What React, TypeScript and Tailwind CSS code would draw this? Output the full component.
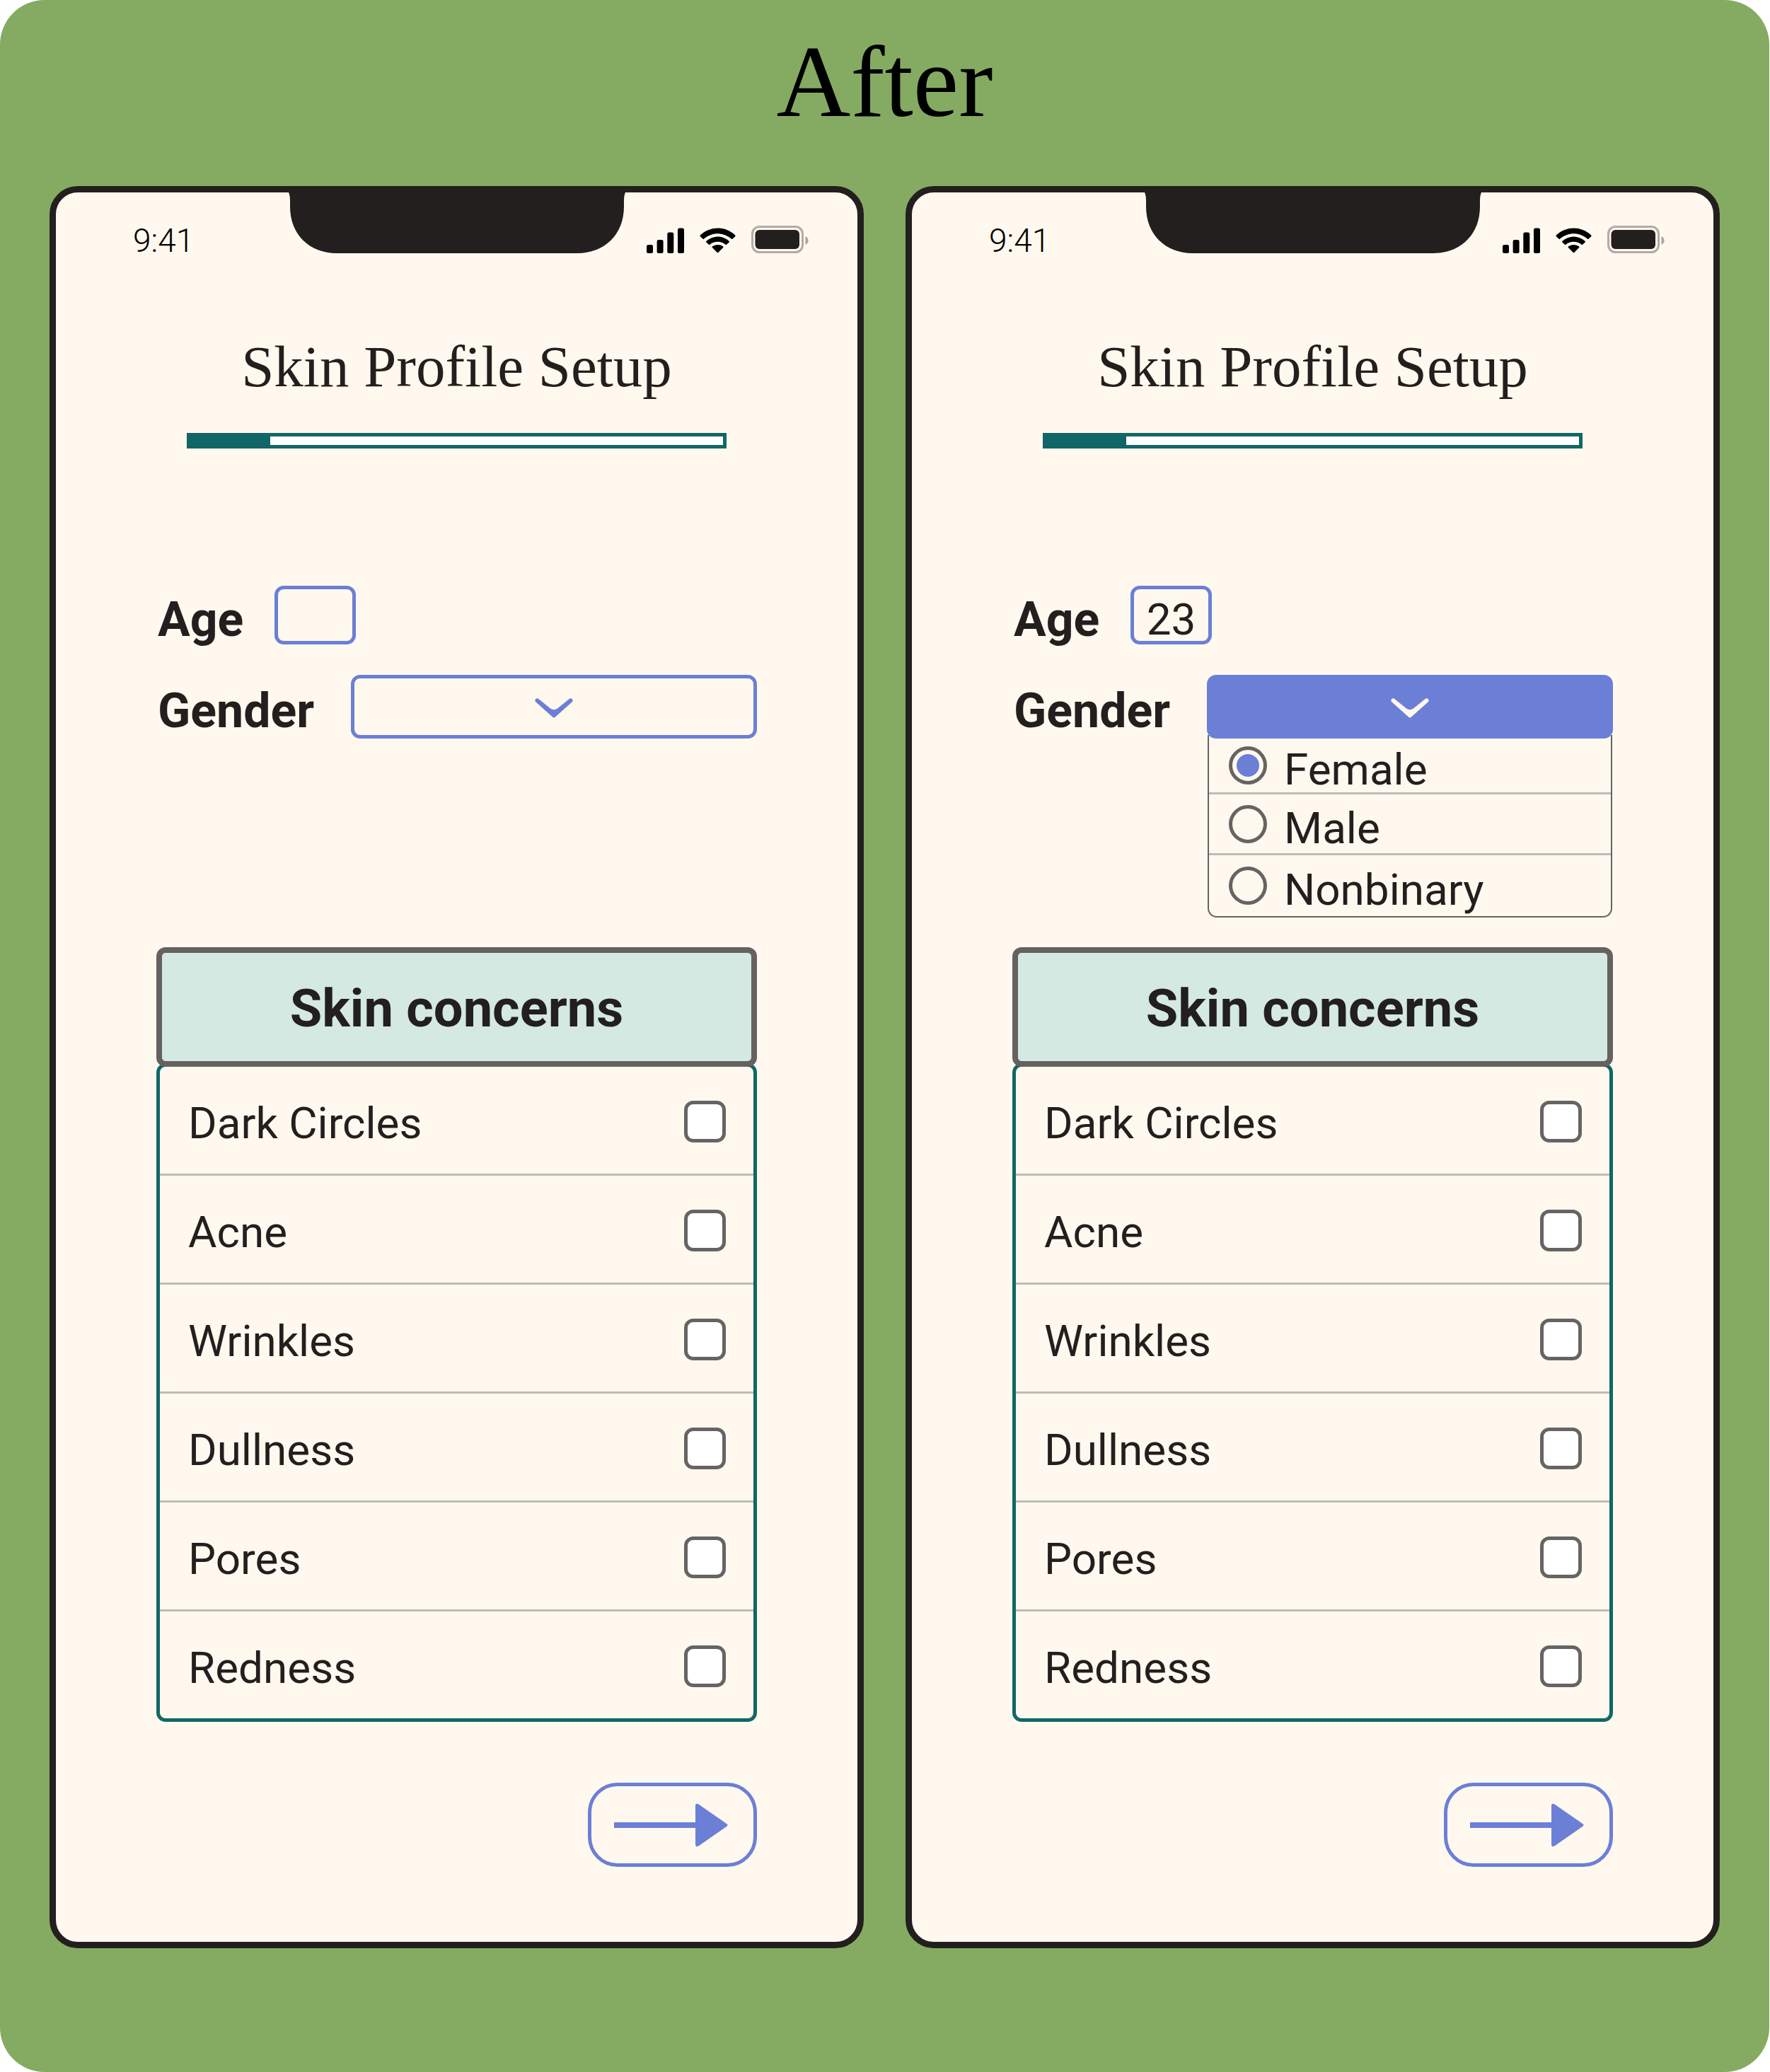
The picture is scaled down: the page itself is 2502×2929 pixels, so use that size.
import { useState } from "react";

const CONCERNS = ["Dark Circles", "Acne", "Wrinkles", "Dullness", "Pores", "Redness"];
const GENDERS = ["Female", "Male", "Nonbinary"];

function Notch() {
  return (
    <svg viewBox="0 0 476 86" className="h-[86px] w-[476px] fill-[#231f1e]" aria-hidden="true">
      <path d="M0 0Q2 4 2 12V20C2 60 30 86 68 86H408C446 86 474 60 474 20V12Q474 4 476 0Z" />
    </svg>
  );
}

function SignalIcon() {
  return (
    <svg viewBox="0 0 53 36" className="h-9 w-[53px] fill-black" aria-hidden="true">
      <rect x="0" y="24" width="9" height="12" rx="2.5" />
      <rect x="14.6" y="17" width="9" height="19" rx="2.5" />
      <rect x="29.3" y="6.5" width="9" height="29.5" rx="2.5" />
      <rect x="44" y="0.5" width="9" height="35.5" rx="2.5" />
    </svg>
  );
}

function WifiIcon() {
  return (
    <svg viewBox="0 0 51 36" className="h-9 w-[51px] fill-black" aria-hidden="true">
      <path d="M1 10.2Q0 11.4 1 12.4L4.6 15.8Q5.2 16.4 5.9 15.8C17.5 5.6 33.5 5.6 45.1 15.8Q45.8 16.4 46.4 15.8L50 12.4Q51 11.4 50 10.2C36 -2.9 15 -2.9 1 10.2Z" />
      <path d="M9.2 18.9Q8.6 19.6 9.2 20.3L12.9 23.7Q13.6 24.3 14.3 23.7C20.6 18.3 30.4 18.3 36.7 23.7Q37.4 24.3 38.1 23.7L41.8 20.3Q42.4 19.6 41.8 18.9C32.4 10.2 18.6 10.2 9.2 18.9Z" />
      <path d="M17.8 26.5Q17.2 27.3 17.9 28L24.8 35Q25.5 35.6 26.2 35L33.1 28Q33.8 27.3 33.2 26.5C28.5 23 22.5 23 17.8 26.5Z" />
    </svg>
  );
}

function BatteryIcon() {
  return (
    <svg viewBox="0 0 81 39" className="h-[39px] w-[81px]" aria-hidden="true">
      <rect x="1.5" y="1.5" width="71" height="36" rx="10" fill="none" stroke="#b5aaa6" strokeWidth="3" />
      <rect x="5.5" y="6" width="62.5" height="27" rx="6" fill="#231f1e" />
      <path d="M76.5 15C82 17.5 82 24.5 76.5 27Z" fill="#ada59f" />
    </svg>
  );
}

function Chevron() {
  return (
    <svg viewBox="0 0 54 28" className="h-7 w-[54px] fill-current" aria-hidden="true">
      <path d="M1 5C-1 2.5 2 -1 5 0.8L22 14.5Q27 18 32 14.5L49 0.8C52 -1 55 2.5 53 5L29 26.5Q27 28.5 25 26.5Z" />
    </svg>
  );
}

function GenderField({ id, open, initial }: { id: string; open: boolean; initial: string }) {
  const [value, setValue] = useState(initial);
  return (
    <div className="flex h-[90px] items-center">
      <label htmlFor={id} className="w-[275px] shrink-0 pt-3 pl-0.5 text-[68px] leading-[78px] font-bold">
        Gender
      </label>
      <div className="relative flex-1">
        <select
          id={id}
          value={value}
          onChange={(e) => setValue(e.target.value)}
          className={
            open
              ? "block h-[90px] w-full appearance-none rounded-[13px] border-[5px] border-[#6c7fd6] bg-[#6c7fd6] text-transparent"
              : "block h-[90px] w-full appearance-none rounded-[13px] border-[5px] border-[#6c7fd6] bg-transparent text-transparent"
          }
        >
          <option value=""></option>
          {GENDERS.map((g) => (
            <option key={g} value={g} className="text-[#231f1e]">
              {g}
            </option>
          ))}
        </select>
        <div
          className={
            open
              ? "pointer-events-none absolute inset-0 flex items-center justify-center pt-1 text-[#fff8ee]"
              : "pointer-events-none absolute inset-0 flex items-center justify-center pt-1 text-[#6c7fd6]"
          }
        >
          <Chevron />
        </div>
        {open && (
          <div
            role="radiogroup"
            aria-label="Gender"
            className="absolute inset-x-px top-[85px] -z-10 rounded-b-[13px] border-2 border-t-0 border-[#666463] pt-[5px]"
          >
            {GENDERS.map((g) => (
              <label
                key={g}
                className="flex h-[86px] items-center gap-6 border-b-[3px] border-[#bdbcba] pl-7 text-[62px] leading-[70px] first:h-[79px] last:border-b-0"
              >
                <input
                  type="radio"
                  name={`${id}-option`}
                  checked={value === g}
                  onChange={() => setValue(g)}
                  className="size-[54px] shrink-0 appearance-none rounded-full border-[5px] border-[#666463] bg-clip-content p-[6px] checked:bg-[#6c7fd6]"
                />
                <span className="pt-3">{g}</span>
              </label>
            ))}
          </div>
        )}
      </div>
    </div>
  );
}

function Phone({ id, age, gender, open }: { id: string; age: string; gender: string; open: boolean }) {
  return (
    <section className="isolate rounded-[40px] border-[9px] border-[#231f1e] bg-[#fff8ee] text-[#231f1e]">
      <div className="grid grid-cols-[1fr_476px_1fr]">
        <div className="flex items-center pt-[50px] pl-[109px] text-[46px] leading-9 font-light text-black">9:41</div>
        <Notch />
        <div className="flex items-end justify-end gap-[22px] pr-[69px]">
          <SignalIcon />
          <WifiIcon />
          <BatteryIcon />
        </div>
      </div>

      <div className="px-[142px] pb-[106px]">
        <h2 className="mt-28 text-center font-['Liberation_Serif',serif] text-[83px] leading-[96px] whitespace-nowrap">
          Skin Profile Setup
        </h2>
        <div
          role="progressbar"
          aria-label="Profile setup progress"
          aria-valuenow={15}
          aria-valuemin={0}
          aria-valuemax={100}
          className="mx-[43px] mt-[46px] h-[22px] border-[5px] border-[#116767] bg-white"
        >
          <div className="h-full w-[15%] bg-[#116767]" />
        </div>

        <div className="mt-[194px] flex h-[83px] items-center">
          <label htmlFor={`${id}-age`} className="w-[167px] pt-3 pl-0.5 text-[68px] leading-[78px] font-bold">
            Age
          </label>
          <input
            id={`${id}-age`}
            type="text"
            inputMode="numeric"
            defaultValue={age}
            className="h-[83px] w-[115px] rounded-[13px] border-[5px] border-[#6c7fd6] bg-transparent pt-3 text-center text-[62px] leading-[60px]"
          />
        </div>

        <div className="mt-[43px]">
          <GenderField id={`${id}-gender`} open={open} initial={gender} />
        </div>

        <div className="mt-[295px]">
          <h3 className="relative z-10 flex h-[169px] items-center justify-center rounded-[13px] border-8 border-[#666160] bg-[#d3e9e2] pt-1 text-[74px] leading-[88px] font-bold">
            Skin concerns
          </h3>
          <div className="-mt-[5px] rounded-[13px] border-[5px] border-[#116767]">
            {CONCERNS.map((c) => (
              <label
                key={c}
                className="flex items-center justify-between border-b-[3px] border-[#bdbcba] pt-12 pr-[39px] pb-11 pl-10 last:border-b-0"
              >
                <span className="pt-1 text-[62px] leading-[55px]">{c}</span>
                <input
                  type="checkbox"
                  className="size-[59px] appearance-none rounded-[13px] border-[5px] border-[#666463] bg-white checked:bg-[#6c7fd6]"
                />
              </label>
            ))}
          </div>
        </div>

        <div className="mt-[86px] flex justify-end">
          <button
            type="button"
            aria-label="Next"
            className="flex h-[119px] w-[239px] items-center justify-center rounded-[42px] border-[5px] border-[#6c7fd6] pr-1"
          >
            <svg viewBox="0 0 161 62" className="h-[62px] w-[161px] fill-[#6c7fd6]" aria-hidden="true">
              <rect x="0" y="27" width="118" height="8" />
              <path d="M115 4Q115 -1 119.500 1.500L159 29Q162 31 159 33L119.500 60.500Q115 63 115 58Z" />
            </svg>
          </button>
        </div>
      </div>
    </section>
  );
}

export default function App() {
  return (
    <div className="bg-white pr-px">
      <main className="rounded-[63px] bg-[#85ab63] px-[70px] pt-[35px] pb-[175px] font-['Roboto',sans-serif]">
        <h1 className="text-center font-['Liberation_Serif',serif] text-[145px] leading-[160px] text-black">After</h1>
        <div className="mt-[68px] grid grid-cols-2 gap-[59px]">
          <Phone id="empty" age="" gender="" open={false} />
          <Phone id="filled" age="23" gender="Female" open={true} />
        </div>
      </main>
    </div>
  );
}
